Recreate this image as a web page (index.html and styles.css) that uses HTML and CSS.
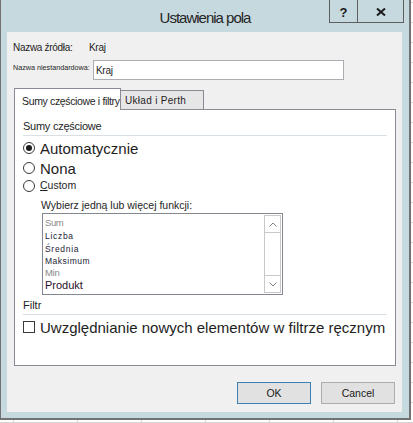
FILE: index.html
```html
<!DOCTYPE html>
<html lang="pl">
<head>
<meta charset="utf-8">
<title>Ustawienia pola</title>
<link rel="stylesheet" href="styles.css">
</head>
<body>
<div class="window">
  <div class="titlebar">
    <div class="tb-spacer"></div>
    <div class="title">Ustawienia pola</div>
    <div class="tbtns">
      <div class="tbtn help">?</div>
      <div class="tbtn close"><svg width="10" height="8" viewBox="0 0 10 8"><path d="M1 0.5 L9 7.5 M9 0.5 L1 7.5" stroke="#1a1a1a" stroke-width="2" fill="none"/></svg></div>
    </div>
  </div>
  <div class="content">
    <div class="row src"><span class="lbl1">Nazwa źródła:</span><span class="val">Kraj</span></div>
    <div class="row custom"><span class="lbl2">Nazwa niestandardowa:</span><div class="field">Kraj</div></div>
    <div class="tabs">
      <div class="tab active">Sumy częściowe i filtry</div>
      <div class="tab inactive">Układ i Perth</div>
    </div>
    <div class="panel">
      <div class="group-h">Sumy częściowe</div>
      <div class="opt opt1"><span class="radio checked"></span><span>Automatycznie</span></div>
      <div class="opt opt2"><span class="radio"></span><span>Nona</span></div>
      <div class="opt opt3"><span class="radio"></span><span><u>C</u>ustom</span></div>
      <div class="fn-label">Wybierz jedną lub więcej funkcji:</div>
      <div class="listbox">
        <div class="items">
          <div class="it sum">Sum</div>
          <div class="it fn liczba">Liczba</div>
          <div class="it fn srednia">Średnia</div>
          <div class="it fn maks">Maksimum</div>
          <div class="it min">Min</div>
          <div class="it produkt">Produkt</div>
        </div>
        <div class="scroll">
          <div class="sb-btn up"><svg width="8" height="5" viewBox="0 0 8 5"><polyline points="0.5,4.5 4,1 7.5,4.5" stroke="#858585" fill="none"/></svg></div>
          <div class="sb-track"></div>
          <div class="sb-btn down"><svg width="8" height="5" viewBox="0 0 8 5"><polyline points="0.5,0.5 4,4 7.5,0.5" stroke="#858585" fill="none"/></svg></div>
        </div>
      </div>
      <div class="group-h filt">Filtr</div>
      <div class="check-row"><span class="check"></span><span>Uwzględnianie nowych elementów w filtrze ręcznym</span></div>
    </div>
    <div class="actions">
      <button class="btn default">OK</button>
      <button class="btn">Cancel</button>
    </div>
  </div>
</div>
</body>
</html>
```
FILE: styles.css
```css
html, body {
  margin: 0;
  padding: 0;
}
body {
  width: 413px;
  height: 423px;
  overflow: hidden;
  background-color: #fff;
  background-image:
    linear-gradient(to right, #d4d4d4 1px, transparent 1px),
    linear-gradient(to bottom, #d4d4d4 1px, transparent 1px);
  background-size: 64px 100%, 100% 20px;
  background-position: 13px 0, 0 2px;
  font-family: "Liberation Sans", Arial, sans-serif;
  color: #1e1e1e;
}
.window {
  width: 411px;
  height: 420px;
  box-sizing: border-box;
  border-left: 1px solid #727272;
  border-right: 2px solid #727272;
  border-bottom: 2px solid #727272;
  background: #c6d9df;
  display: flex;
  flex-direction: column;
}
.titlebar {
  height: 32px;
  flex: none;
  display: grid;
  grid-template-columns: 1fr auto 1fr;
}
.title {
  padding-top: 6px;
  line-height: 24px;
  font-size: 15px;
  letter-spacing: -1px;
  color: #262626;
  white-space: nowrap;
}
.tbtns {
  justify-self: end;
  align-self: start;
  margin-right: 5px;
  display: flex;
}
.tbtn {
  height: 23px;
  box-sizing: border-box;
  border-bottom: 1px solid #5f5f5f;
  border-right: 1px solid #5f5f5f;
  display: flex;
  align-items: center;
  justify-content: center;
}
.help {
  width: 29px;
  border-left: 1px solid #5f5f5f;
  font-weight: bold;
  font-size: 13px;
  padding-top: 2px;
  color: #1a1a1a;
}
.close {
  width: 46px;
  padding-top: 2px;
}
.content {
  flex: 1;
  margin: 0 7px 6px 6px;
  padding-top: 6px;
  background: #f0f0f0;
  display: flex;
  flex-direction: column;
}
.row {
  display: flex;
  padding-left: 6px;
  height: 20px;
  white-space: nowrap;
}
.src {
  line-height: 20px;
  font-size: 10px;
  letter-spacing: -0.3px;
}
.lbl1 {
  width: 76px;
}
.custom {
  margin-top: 2px;
  align-items: flex-start;
}
.lbl2 {
  width: 80px;
  font-size: 7.2px;
  line-height: 10px;
  margin-top: 3px;
}
.field {
  width: 251px;
  height: 20px;
  box-sizing: border-box;
  border: 1px solid #abadb3;
  background: #fff;
  padding: 2px 0 0 2px;
  line-height: 16px;
  font-size: 10px;
  letter-spacing: -0.3px;
}
.tabs {
  margin: 8px 0 0 7px;
  height: 21px;
  display: flex;
  align-items: flex-end;
  position: relative;
  z-index: 1;
}
.tab {
  box-sizing: border-box;
  border: 1px solid #898c95;
  border-bottom: none;
  white-space: nowrap;
}
.tab.active {
  width: 107px;
  height: 22px;
  margin-bottom: -1px;
  background: #fff;
  padding: 5px 0 0 7px;
  line-height: 15px;
  font-size: 10.5px;
  letter-spacing: -0.35px;
  overflow: hidden;
}
.tab.inactive {
  width: 84px;
  height: 19px;
  margin-left: -1px;
  background: #e6e6e6;
  padding: 2px 0 0 4px;
  line-height: 15px;
  font-size: 10px;
  letter-spacing: 0.3px;
}
.panel {
  margin-left: 7px;
  width: 382px;
  height: 257px;
  box-sizing: border-box;
  border: 1px solid #898c95;
  background: #fff;
  flex: none;
}
.group-h {
  margin: 0 8px;
  padding: 8px 0 1px;
  line-height: 16px;
  font-size: 11px;
  letter-spacing: -0.25px;
  border-bottom: 1px solid #d8e0e5;
}
.group-h.filt {
  padding: 3px 0 2px;
  line-height: 14px;
  letter-spacing: 0;
}
.opt {
  display: flex;
  align-items: flex-start;
  margin-left: 8px;
  font-size: 15px;
  white-space: nowrap;
}
.opt1 {
  margin-top: 3px;
  line-height: 20px;
}
.opt2 {
  line-height: 19px;
}
.opt3 {
  font-size: 10.5px;
  line-height: 15px;
}
.radio {
  flex: none;
  width: 12px;
  height: 12px;
  box-sizing: border-box;
  border: 1px solid #3a3a3a;
  border-radius: 50%;
  background: #fff;
  margin: 3px 5px 0 0;
  display: flex;
  align-items: center;
  justify-content: center;
}
.opt3 .radio {
  margin-top: 2px;
}
.radio.checked::after {
  content: "";
  width: 6px;
  height: 6px;
  border-radius: 50%;
  background: #1a1a1a;
}
.fn-label {
  margin: 5px 0 0 26px;
  font-size: 10.5px;
  line-height: 14px;
  white-space: nowrap;
}
.listbox {
  margin: 1px 0 0 27px;
  width: 241px;
  height: 82px;
  box-sizing: border-box;
  border: 1px solid #828790;
  background: #fff;
  display: flex;
}
.items {
  flex: 1;
  padding: 1px 0 0 2px;
  white-space: nowrap;
}
.it.sum {
  font-size: 9.5px;
  line-height: 15px;
  color: #8a8a8a;
  letter-spacing: -0.4px;
}
.it.fn {
  font-size: 8.5px;
  letter-spacing: 0.7px;
  color: #1c1c36;
}
.it.liczba { line-height: 13.5px; }
.it.srednia { line-height: 11.8px; }
.it.maks { line-height: 13px; letter-spacing: 0.5px; }
.it.min {
  font-size: 9.5px;
  line-height: 9.6px;
  color: #8a8a8a;
  letter-spacing: -0.3px;
}
.it.produkt {
  font-size: 11px;
  line-height: 15.8px;
  color: #2a0f28;
}
.scroll {
  flex: none;
  width: 17px;
  margin: 1px 1px 1px 0;
  box-sizing: border-box;
  border: 1px solid #c8c8c8;
  display: flex;
  flex-direction: column;
}
.sb-btn {
  height: 16px;
  flex: none;
  display: flex;
  align-items: center;
  justify-content: center;
}
.sb-btn.up {
  border-bottom: 1px solid #c8c8c8;
}
.sb-btn.down {
  border-top: 1px solid #c8c8c8;
}
.sb-track {
  flex: 1;
}
.check-row {
  display: flex;
  align-items: flex-start;
  margin: 3px 0 0 8px;
  font-size: 15px;
  line-height: 20px;
  white-space: nowrap;
}
.check {
  flex: none;
  width: 12px;
  height: 12px;
  box-sizing: border-box;
  border: 1px solid #3a3a3a;
  background: #fff;
  margin: 3px 5px 0 0;
}
.actions {
  display: flex;
  justify-content: flex-end;
  gap: 10px;
  margin: 16px 7px 0 0;
}
.btn {
  width: 74px;
  height: 22px;
  box-sizing: border-box;
  border: 1px solid #adadad;
  background: #e1e1e1;
  padding: 0;
  font-family: "Liberation Sans", Arial, sans-serif;
  font-size: 10.5px;
  line-height: 20px;
  color: #1a1a1a;
}
.btn.default {
  border-color: #3c7fb1;
}
```
